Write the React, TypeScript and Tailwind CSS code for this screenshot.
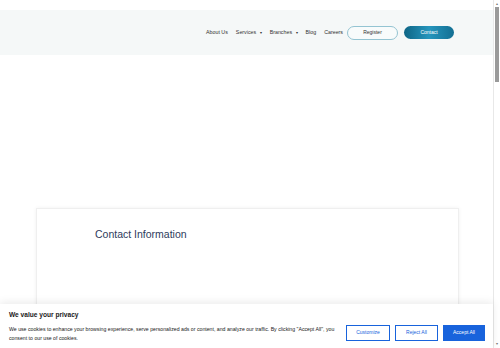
import React from "react";

export default function App() {
  const font = { fontFamily: '"Liberation Sans", Arial, sans-serif' };
  return (
    <div className="relative w-[500px] h-[348px] overflow-hidden bg-white flex" style={font}>
      <div className="flex-1 h-[348px] overflow-hidden">
        <div className="pt-[10px]">
          <header className="h-[45px] bg-[#f5f8f8] flex items-center justify-end pr-[39px]">
            <nav className="flex items-center text-[5.3px] text-[#333] gap-[8px]">
              <span>About Us</span>
              <span className="flex items-center gap-[3.5px]">Services <span className="text-[4px]">▾</span></span>
              <span className="flex items-center gap-[3.5px]">Branches <span className="text-[4px]">▾</span></span>
              <span>Blog</span>
              <span>Careers</span>
            </nav>
            <button className="ml-[4px] w-[51px] h-[14px] rounded-full border border-[#94c4d2] bg-[#f8fbfb] text-[5px] text-[#333] flex items-center justify-center">
              Register
            </button>
            <button className="ml-[6px] w-[50px] h-[13px] rounded-full bg-gradient-to-r from-[#0e6585] via-[#2696bd] to-[#136f93] text-[5px] text-white flex items-center justify-center">
              Contact
            </button>
          </header>
          <div className="h-[153px]" />
          <section className="ml-[36px] mr-[34px] h-[1400px] bg-white border border-[#efefef] shadow-[0_0_4px_rgba(0,0,0,0.06)] pt-[18px] pl-[58px]">
            <h2 className="text-[10.5px] text-[#2d3b5c] leading-[14px]">Contact Information</h2>
          </section>
        </div>
      </div>
      <div className="w-[7px] h-[348px] bg-white border-l border-[#e8e8e8] flex flex-col items-center">
        <div className="mt-[2px] text-[4px] leading-[4px] text-[#777]">▴</div>
        <div className="mt-[1px] w-[4px] h-[75px] bg-[#9a9a9a]" />
        <div className="mt-auto mb-[2px] text-[4px] leading-[4px] text-[#777]">▾</div>
      </div>
      <div className="absolute left-0 bottom-0 right-[7px] h-[44px] bg-white shadow-[0_-2px_8px_rgba(0,0,0,0.08)] flex items-start pl-[9px] pr-[8px]">
        <div className="flex-1 pt-[6px]">
          <div className="text-[6.6px] font-bold text-[#212121] leading-[9px]">We value your privacy</div>
          <p className="mt-[6px] text-[5.2px] leading-[9px] text-[#212121] w-[330px]">
            We use cookies to enhance your browsing experience, serve personalized ads or content, and analyze our traffic. By clicking "Accept All", you consent to our use of cookies.
          </p>
        </div>
        <div className="flex gap-[5px] mt-[21px]">
          <button className="w-[44px] h-[16px] border border-[#1863dc] text-[#1863dc] text-[5px] bg-white">Customize</button>
          <button className="w-[43px] h-[16px] border border-[#1863dc] text-[#1863dc] text-[5px] bg-white">Reject All</button>
          <button className="w-[42px] h-[16px] border border-[#1863dc] bg-[#1863dc] text-white text-[5px]">Accept All</button>
        </div>
      </div>
    </div>
  );
}
